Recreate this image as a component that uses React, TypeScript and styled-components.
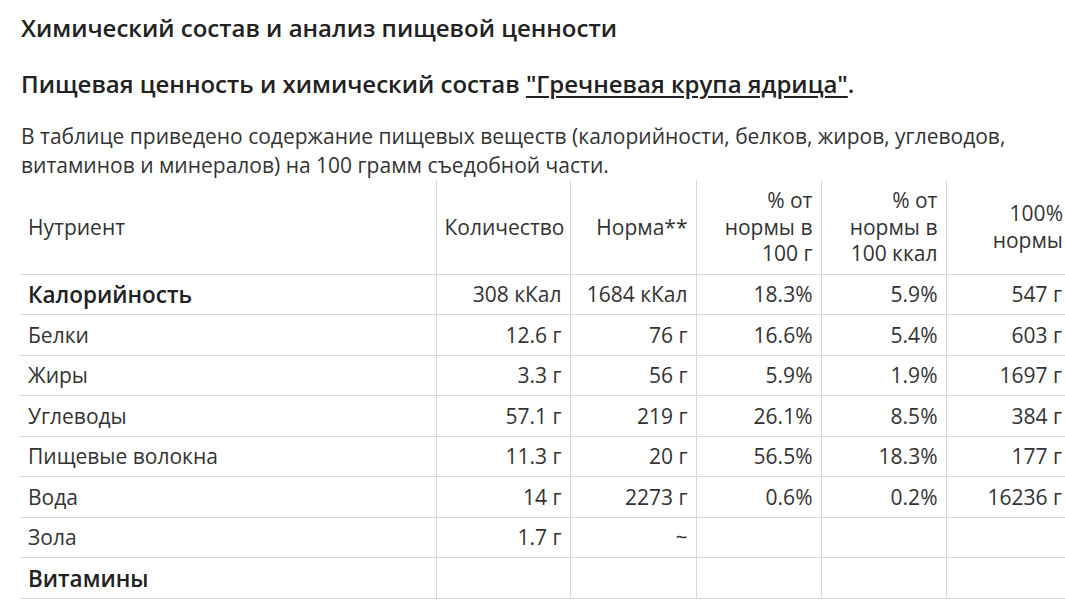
import React from "react";
import styled, { createGlobalStyle } from "styled-components";

const Global = createGlobalStyle`
  html, body { margin: 0; padding: 0; background: #fff; overflow: hidden; }
  body { font-family: "Open Sans", "Noto Sans", sans-serif; color: #222; }
`;

const Page = styled.div`
  padding: 13px 0 0 21px;
  width: 1044px;
`;

const Title = styled.h2`
  margin: 0;
  font-size: 24px;
  font-weight: 600;
  line-height: 30px;
  color: #222;
`;

const Subtitle = styled.h3`
  margin: 26px 0 0;
  font-size: 24px;
  font-weight: 600;
  line-height: 30px;
  color: #222;
  a { color: inherit; text-decoration: underline; text-underline-offset: 3px; }
`;

const Lead = styled.p`
  margin: 23px 0 0;
  font-size: 21px;
  line-height: 29px;
  color: #333;
`;

const Table = styled.table`
  margin-left: -1px;
  border-collapse: collapse;
  table-layout: fixed;
  width: 1045px;
  font-size: 21px;
  color: #333;
`;

const Th = styled.th<{ $w: number; $left?: boolean }>`
  box-sizing: border-box;
  width: ${(p) => p.$w}px;
  font-weight: 400;
  line-height: 26.5px;
  padding: 7px 8px 7px 8px;
  text-align: ${(p) => (p.$left ? "left" : "right")};
  vertical-align: middle;
  border-bottom: 1px solid #d6d9dc;
  & + & { border-left: 1px solid #d6d9dc; }
  &:last-child { padding-right: 2px; }
`;

const Td = styled.td<{ $left?: boolean; $strong?: boolean }>`
  box-sizing: border-box;
  line-height: 27px;
  padding: 6.5px 8px 6px 8px;
  text-align: ${(p) => (p.$left ? "left" : "right")};
  font-size: ${(p) => (p.$strong ? "22.5px" : "21px")};
  font-weight: ${(p) => (p.$strong ? 600 : 400)};
  color: ${(p) => (p.$strong ? "#222" : "#333")};
  white-space: nowrap;
  border-bottom: 1px solid #d6d9dc;
  & + & { border-left: 1px solid #d6d9dc; }
  &:last-child { padding-right: 3px; }
`;

type Row = { name: string; strong?: boolean; vals: string[] };

const rows: Row[] = [
  { name: "Калорийность", strong: true, vals: ["308 кКал", "1684 кКал", "18.3%", "5.9%", "547 г"] },
  { name: "Белки", vals: ["12.6 г", "76 г", "16.6%", "5.4%", "603 г"] },
  { name: "Жиры", vals: ["3.3 г", "56 г", "5.9%", "1.9%", "1697 г"] },
  { name: "Углеводы", vals: ["57.1 г", "219 г", "26.1%", "8.5%", "384 г"] },
  { name: "Пищевые волокна", vals: ["11.3 г", "20 г", "56.5%", "18.3%", "177 г"] },
  { name: "Вода", vals: ["14 г", "2273 г", "0.6%", "0.2%", "16236 г"] },
  { name: "Зола", vals: ["1.7 г", "~", "", "", ""] },
  { name: "Витамины", strong: true, vals: ["", "", "", "", ""] },
];

export default function App() {
  return (
    <>
      <Global />
      <Page>
        <Title>Химический состав и анализ пищевой ценности</Title>
        <Subtitle>
          Пищевая ценность и химический состав <a href="#">"Гречневая крупа ядрица"</a>.
        </Subtitle>
        <Lead>
          В таблице приведено содержание пищевых веществ (калорийности, белков, жиров, углеводов,
          витаминов и минералов) на 100 грамм съедобной части.
        </Lead>
        <Table>
          <thead>
            <tr>
              <Th $w={416} $left>Нутриент</Th>
              <Th $w={134}>Количество</Th>
              <Th $w={126}>Норма**</Th>
              <Th $w={125}>% от нормы в 100 г</Th>
              <Th $w={125}>% от нормы в 100 ккал</Th>
              <Th $w={119}>100% нормы</Th>
            </tr>
          </thead>
          <tbody>
            {rows.map((r) => (
              <tr key={r.name}>
                <Td $left $strong={r.strong}>{r.name}</Td>
                {r.vals.map((v, i) => (
                  <Td key={i}>{v}</Td>
                ))}
              </tr>
            ))}
          </tbody>
        </Table>
      </Page>
    </>
  );
}
